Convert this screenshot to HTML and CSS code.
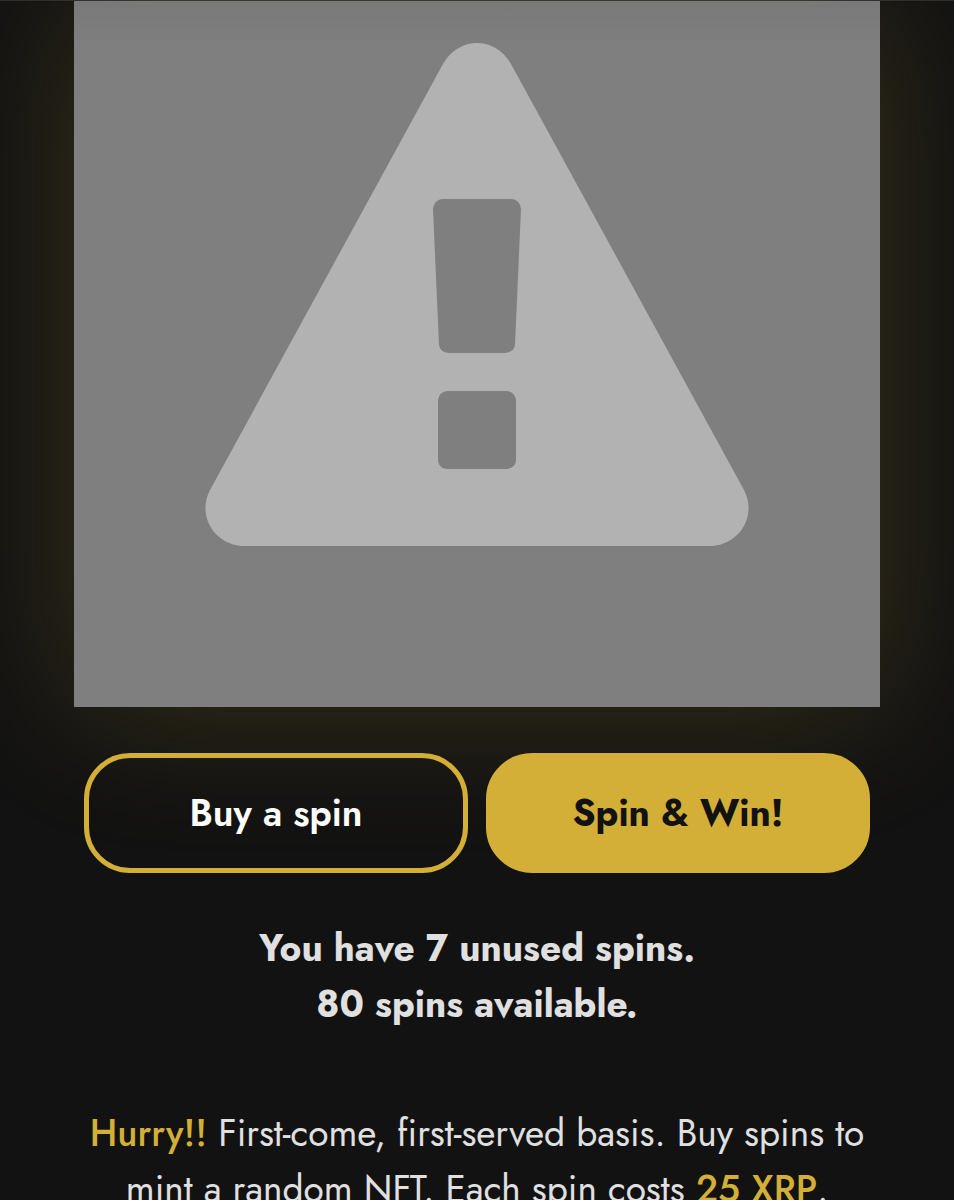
FILE: index.html
```html
<!DOCTYPE html>
<html lang="en">

<head>
    <meta charset="UTF-8">
    <meta name="viewport" content="width=device-width, initial-scale=1.0">
    <title>Spin &amp; Win</title>
    <link rel="stylesheet" href="styles.css">
</head>

<body>
    <main class="spin">
        <svg class="spin-image" viewBox="0 0 806 706" role="img" aria-label="Warning">
            <defs>
                <linearGradient id="shade" x1="0" y1="0" x2="0" y2="1">
                    <stop offset="0" stop-color="#000" stop-opacity="0.05" />
                    <stop offset="1" stop-color="#000" stop-opacity="0" />
                </linearGradient>
            </defs>
            <rect width="806" height="706" fill="#7f7f7f" />
            <!-- triangle with the exclamation mark cut out -->
            <path fill="#b2b2b2" fill-rule="evenodd" d="M369 63C385 35 421 35 437 63L670 489C684 516 664 545 635 545H171C142 545 122 516 136 489Z
                M368 198H438Q446 199 447 208L441 344Q440 351 431 352H375Q366 351 365 344L359 208Q360 199 368 198Z
                M373 390H433Q441 391 442 399V460Q441 467 433 468H373Q365 467 364 460V399Q365 391 373 390Z" />
            <rect width="806" height="45" fill="url(#shade)" />
        </svg>

        <div class="buttons">
            <button type="button" class="btn btn-outline">Buy a spin</button>
            <button type="button" class="btn btn-gold">Spin &amp; Win!</button>
        </div>

        <p class="status">You have 7 unused spins.<br>80 spins available.</p>

        <p class="info"><strong>Hurry!!</strong> First-come, first-served basis. Buy spins to<br>
            mint a random NFT. Each spin costs <strong>25 XRP</strong>.</p>
    </main>
</body>

</html>
```

FILE: styles.css
```css
* {
    box-sizing: border-box;
}

body {
    margin: 0;
    height: 100vh;
    overflow: hidden;
    background-color: #121212;
    color: #e0e0e0;
    font-family: Jost, Lato, sans-serif;
    font-size: 37px;
    line-height: 56px;
    text-align: center;
}

.spin {
    padding: 0 74px;
    border-top: 1px solid #2b2b2e;
}

.spin-image {
    display: block;
    width: 100%;
    box-shadow: 0 0 140px rgba(212, 175, 55, 0.2);
}

.buttons {
    display: flex;
    gap: 18px;
    margin-top: 46px;
    padding: 0 10px;
}

.btn {
    flex: 1;
    height: 120px;
    border: 5px solid #d3af37;
    border-radius: 46px;
    font: inherit;
    cursor: pointer;
}

.btn-outline {
    background: transparent;
    color: #fff;
    font-weight: 600;
}

.btn-gold {
    background: #d3af37;
    color: #121212;
    font-weight: 700;
}

.status {
    margin: 47px 0 73px;
    font-weight: 700;
}

.info {
    margin: 0;
}

.info strong {
    color: #d3af37;
    font-weight: 500;
}
```
